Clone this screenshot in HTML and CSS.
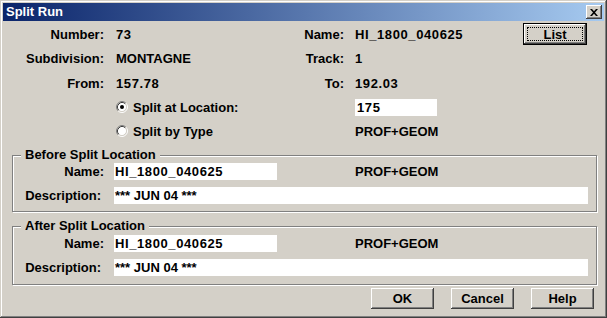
FILE: index.html
```html
<!DOCTYPE html>
<html lang="en">
<head>
<meta charset="utf-8">
<title>Split Run</title>
<link rel="stylesheet" href="styles.css">
</head>
<body>
<div class="window">
  <div class="titlebar">
    <span class="title">Split Run</span>
    <button class="close" aria-label="Close">
      <svg width="8" height="7" viewBox="0 0 8 7"><path d="M0 0h2l2 2.3L6 0h2L5 3.5 8 7H6L4 4.7 2 7H0l3-3.5z" fill="#000"/></svg>
    </button>
  </div>
  <div class="client">
    <div class="info">
      <span class="lbl k1">Number:</span><span class="val v1 num">73</span>
      <span class="lbl k2">Name:</span><span class="val v2 num">HI_1800_040625</span>
      <button class="btn btn-default list"><span class="focus">List</span></button>

      <span class="lbl k1">Subdivision:</span><span class="val v1">MONTAGNE</span>
      <span class="lbl k2">Track:</span><span class="val v2">1</span>

      <span class="lbl k1">From:</span><span class="val v1 num">157.78</span>
      <span class="lbl k2">To:</span><span class="val v2 num">192.03</span>

      <label class="opt">
        <svg class="radio" width="12" height="12" viewBox="0 0 12 12">
          <circle cx="6" cy="6" r="4.5" fill="#fff"/>
          <path d="M2.11 9.89A5.5 5.5 0 0 1 9.89 2.11" fill="none" stroke="#808080"/>
          <path d="M9.89 2.11A5.5 5.5 0 0 1 2.11 9.89" fill="none" stroke="#fff"/>
          <path d="M2.82 9.18A4.5 4.5 0 0 1 9.18 2.82" fill="none" stroke="#404040"/>
          <path d="M9.18 2.82A4.5 4.5 0 0 1 2.82 9.18" fill="none" stroke="#d4d0c8"/>
          <circle cx="6" cy="6" r="2" fill="#000"/>
        </svg>
        <span>Split at Location:</span>
      </label>
      <span class="field v2 loc num">175</span>

      <label class="opt">
        <svg class="radio" width="12" height="12" viewBox="0 0 12 12">
          <circle cx="6" cy="6" r="4.5" fill="#fff"/>
          <path d="M2.11 9.89A5.5 5.5 0 0 1 9.89 2.11" fill="none" stroke="#808080"/>
          <path d="M9.89 2.11A5.5 5.5 0 0 1 2.11 9.89" fill="none" stroke="#fff"/>
          <path d="M2.82 9.18A4.5 4.5 0 0 1 9.18 2.82" fill="none" stroke="#404040"/>
          <path d="M9.18 2.82A4.5 4.5 0 0 1 2.82 9.18" fill="none" stroke="#d4d0c8"/>
        </svg>
        <span>Split by Type</span>
      </label>
      <span class="val v2">PROF+GEOM</span>
    </div>

    <div class="group group-before">
      <span class="legend">Before Split Location</span>
      <span class="glbl">Name:</span><span class="field name-field num">HI_1800_040625</span><span class="gval">PROF+GEOM</span>
      <span class="glbl glbl-desc">Description:</span><span class="field desc-field">*** JUN 04 ***</span>
    </div>

    <div class="group group-after">
      <span class="legend">After Split Location</span>
      <span class="glbl">Name:</span><span class="field name-field num">HI_1800_040625</span><span class="gval">PROF+GEOM</span>
      <span class="glbl glbl-desc">Description:</span><span class="field desc-field">*** JUN 04 ***</span>
    </div>

    <div class="actions">
      <button class="btn">OK</button>
      <button class="btn">Cancel</button>
      <button class="btn">Help</button>
    </div>
  </div>
</div>
</body>
</html>
```

FILE: styles.css
```css
* { box-sizing: border-box; }

html, body {
  margin: 0;
  padding: 0;
  background: #d4d0c8;
}

body {
  font-family: "Liberation Sans", Arial, sans-serif;
  font-weight: bold;
  font-size: 13px;
  color: #000;
}

.window {
  width: 607px;
  height: 318px;
  padding: 3px;
  background: #d4d0c8;
  box-shadow: inset -1px -1px #404040, inset 1px 1px #d4d0c8,
              inset -2px -2px #808080, inset 2px 2px #fff;
  display: flex;
  flex-direction: column;
}

.titlebar {
  height: 18px;
  margin-bottom: 1px;
  padding: 0 2px 0 3px;
  background: linear-gradient(to right, #0a246a, #a6caf0);
  display: flex;
  align-items: center;
  justify-content: space-between;
}

.title {
  color: #fff;
  font-size: 13px;
  line-height: 18px;
}

.close {
  width: 16px;
  height: 14px;
  padding: 0;
  border: none;
  background: #d4d0c8;
  box-shadow: inset -1px -1px #404040, inset 1px 1px #fff,
              inset -2px -2px #808080, inset 2px 2px #d4d0c8;
  display: flex;
  align-items: center;
  justify-content: center;
}

.client {
  flex: 1;
  display: flex;
  flex-direction: column;
}

.info {
  display: grid;
  grid-template-columns: 113px 180px 59px 168px 64px;
  grid-template-rows: 24px 25px 24px 24px 24px;
  align-items: center;
}

.lbl { text-align: right; white-space: nowrap; }
.k1 { grid-column: 1; padding-right: 12px; }
.v1 { grid-column: 2; }
.k2 { grid-column: 3; padding-right: 11px; }
.v2 { grid-column: 4; }
.val { white-space: nowrap; }
.num { letter-spacing: 0.6px; }

.opt {
  grid-column: 2 / 4;
  display: flex;
  align-items: center;
  gap: 5px;
}

.radio { display: block; flex: none; }

.field {
  display: block;
  background: #fff;
  height: 17px;
  line-height: 17px;
  padding-left: 2px;
  white-space: nowrap;
}

.loc { width: 82px; justify-self: start; }

.btn {
  font: inherit;
  color: #000;
  width: 63px;
  height: 21px;
  padding: 0;
  border: none;
  background: #d4d0c8;
  box-shadow: inset -1px -1px #404040, inset 1px 1px #fff,
              inset -2px -2px #808080, inset 2px 2px #d4d0c8;
}

.btn-default {
  grid-column: 5;
  grid-row: 1;
  width: 64px;
  height: 22px;
  padding: 4px;
  display: flex;
  box-shadow: inset 0 0 0 1px #000,
              inset -2px -2px #404040, inset 2px 2px #fff,
              inset -3px -3px #808080, inset 3px 3px #d4d0c8;
}

.focus {
  flex: 1;
  border: 1px dotted #000;
  display: flex;
  align-items: center;
  justify-content: center;
  line-height: 1;
}

.group {
  position: relative;
  margin: 12px 7px 0 9px;
  border: 1px solid #808080;
  box-shadow: inset 1px 1px #fff, 1px 1px #fff;
  display: grid;
  grid-template-columns: 101px 241px 1fr;
  row-gap: 7px;
  align-items: center;
  padding: 7px 8px 7px 0;
}

.group-after {
  margin-top: 14px;
  padding: 8px 8px 8px 0;
}

.legend {
  position: absolute;
  top: -9px;
  left: 8px;
  padding: 0 4px;
  line-height: 16px;
  background: #d4d0c8;
}

.glbl { text-align: right; padding-right: 10px; white-space: nowrap; }
.glbl-desc { padding-right: 13px; }

.name-field { width: 163px; padding-left: 1px; }
.desc-field { grid-column: 2 / 4; padding-left: 1px; }
.gval { white-space: nowrap; }

.actions {
  margin-top: 3px;
  padding-right: 10px;
  display: flex;
  justify-content: flex-end;
  gap: 17px;
}
```
